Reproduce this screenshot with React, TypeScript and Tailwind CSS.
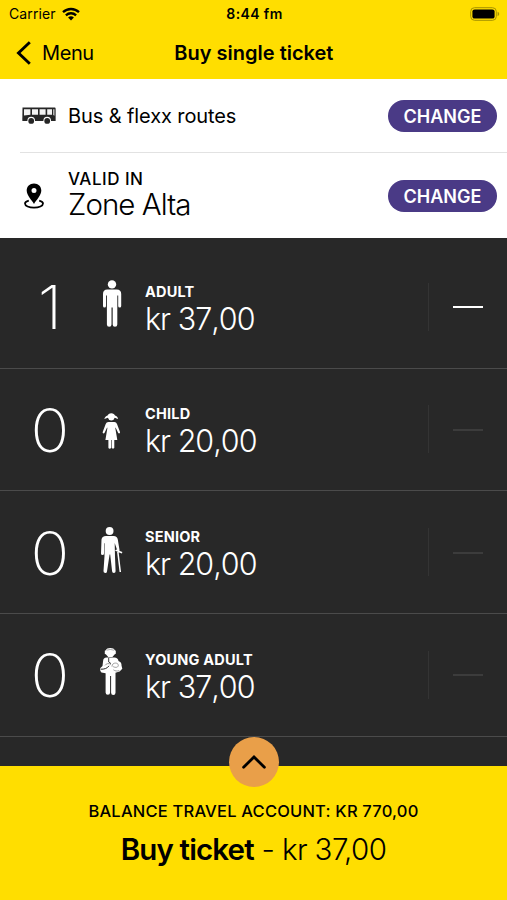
import React from 'react';

type Kind = 'adult' | 'child' | 'senior' | 'young';

interface Ticket {
  kind: Kind;
  label: string;
  price: string;
  count: number;
}

const tickets: Ticket[] = [
  { kind: 'adult', label: 'ADULT', price: 'kr 37,00', count: 1 },
  { kind: 'child', label: 'CHILD', price: 'kr 20,00', count: 0 },
  { kind: 'senior', label: 'SENIOR', price: 'kr 20,00', count: 0 },
  { kind: 'young', label: 'YOUNG ADULT', price: 'kr 37,00', count: 0 },
];

const WifiIcon: React.FC = () => (
  <svg className="w-[18px] h-[14px]" viewBox="0 0 18 14" fill="none" stroke="black" strokeWidth="2.3">
    <path d="M1 5.2a11.6 11.6 0 0 1 16 0" />
    <path d="M3.9 8.3a7.4 7.4 0 0 1 10.2 0" />
    <path d="M6.1 10.6a4.3 4.3 0 0 1 5.8 0L9 13.5z" fill="black" stroke="none" />
  </svg>
);

const BatteryIcon: React.FC = () => (
  <svg className="w-[30px] h-[14px]" viewBox="0 0 30 14">
    <rect x="0.7" y="0.7" width="25.6" height="12.6" rx="3.8" fill="none" stroke="#a69200" strokeWidth="1" />
    <rect x="2.4" y="2.4" width="22.2" height="9.2" rx="2.2" fill="black" />
    <path d="M27.6 4.8v4.4c1-.4 1.6-1.2 1.6-2.2s-.6-1.8-1.6-2.2z" fill="#a69200" />
  </svg>
);

const BusIcon: React.FC = () => (
  <svg className="w-[34px] h-[17px]" viewBox="0 0 34 17">
    <path d="M.5.5h32.3q.8 0 .8.9v12.6H.9q-.6 0-.6-.6z" fill="#262626" />
    <path d="M2 2.2h6.4v5.6L2 8.600zM10 2.200h6v5.600h-6zM17.600 2.200h6v5.600h-6zM25.200 2.200h4.800v5.600h-4.800zM31.300 2.200h1.100v6.600l-1.100-.8z" fill="#f4f4f4" />
    <circle cx="9.200" cy="13.600" r="3.800" fill="white" />
    <circle cx="25.200" cy="13.600" r="3.800" fill="white" />
    <circle cx="9.200" cy="13.900" r="2.900" fill="#262626" />
    <circle cx="25.200" cy="13.900" r="2.900" fill="#262626" />
  </svg>
);

const PinIcon: React.FC = () => (
  <svg className="w-5 h-[26px]" viewBox="0 0 20 26">
    <path
      d="M10 .4c-4.300 0-7.300 3.100-7.300 7.200C2.700 12.400 7.600 17 10 21c2.400-4 7.300-8.600 7.300-13.400C17.300 3.500 14.300.4 10 .4zm0 4.500a2.500 2.500 0 1 1 0 5 2.500 2.500 0 0 1 0-5z"
      fill="black"
      fillRule="evenodd"
    />
    <path d="M4.800 17.600C2.300 18.200 1 19.300 1 20.600c0 2.400 4 4.100 9 4.100s9-1.700 9-4.100c0-1.300-1.300-2.400-3.800-3" fill="none" stroke="black" strokeWidth="1.800" />
  </svg>
);

const PersonIcon: React.FC<{ kind: Kind }> = ({ kind }) => {
  if (kind === 'adult') {
    return (
      <svg className="w-6 h-12 mb-[5px]" viewBox="0 0 24 48" fill="white">
        <circle cx="12" cy="4.400" r="4.200" />
        <path d="M7.300 9.600h9.400q4.500 0 4.500 4.500v12a1.500 1.500 0 0 1-3 0v-10.700h-.9v29a2 2 0 0 1-4.600 0v-17h-1.200v17a2 2 0 0 1-4.600 0v-29h-.9v10.700a1.500 1.500 0 0 1-3 0v-12q0-4.500 4.300-4.500z" />
      </svg>
    );
  }
  if (kind === 'child') {
    return (
      <svg className="w-6 h-12" viewBox="0 0 24 48" fill="white">
        <path d="M11.300 8.200c2 0 3.300 1 3.700 2.300 1.700.4 2.700 1.500 3.200 3.600l-3.500-1.300a3.500 3.500 0 0 1-6.800 0l-3.600 1.300c.6-2.100 1.600-3.200 3.300-3.600.4-1.300 1.700-2.300 3.700-2.300z" />
        <path d="M8.400 17.100h6q1.900 0 2.600 1.900l3 8.100c.4 1.300-1.300 1.900-1.900.7l-2.500-5.300-.3.400 2 12.200h-3v7.600a1.400 1.400 0 0 1-2.600 0v-7.600h-.6v7.600a1.400 1.400 0 0 1-2.700 0v-7.600h-3l2-12.200-.3-.4-2.500 5.300c-.6 1.200-2.300.6-1.900-.7l3-8.100q.7-1.900 2.700-1.900z" />
      </svg>
    );
  }
  if (kind === 'senior') {
    return (
      <svg className="w-6 h-12 mb-[3px]" viewBox="0 0 24 48" fill="white">
        <circle cx="9.600" cy="4" r="3.900" />
        <path d="M6 8.900h7.600q3.600 0 4.200 3.700l1.800 10.800-1.900 1.300-3-8.700.3 13.700.6 14.500a1.700 1.700 0 0 1-3.500 0L10.200 27.500h-.6L7 44.400a1.700 1.700 0 0 1-3.500-.4L4.500 29V16l-.5.600v9.800a1.400 1.400 0 0 1-3 0l.5-13.800q.5-3.700 4.500-3.700z" />
        <path d="M15.700 24c1-1.400 2.300-.7 2.700.3l3.700 1.500M17.800 24.700l2.500 20.300" fill="none" stroke="white" strokeWidth="1.500" />
      </svg>
    );
  }
  return (
    <svg className="w-6 h-12 mb-[5px]" viewBox="0 0 24 48" fill="white">
      <path d="M10.300 0q3.600 0 4.500 2.300l1 .5v3l-1 .4-2.400 2.700H8.200L5.800 6.300l-1-.4V2.800l1-.5Q6.700 0 10.300 0z" />
      <path d="M6.600 2.200q3.700-1.500 7.400 0" fill="none" stroke="#777" strokeWidth=".6" />
      <path d="M6.600 9.500h7.700q3.700 0 4.200 3.600 3.300 1.300 3 4.400l.8 3.300-2.700 2.600-4.100 1.300v20a1.700 1.700 0 0 1-4.400 0V28h-1v16.600a1.700 1.700 0 0 1-4.500 0V25.200l-4.200-.6Q-.6 22.300.4 20l2.100-2 .6-4.900Q3.200 9.500 6.600 9.500z" />
      <path d="M8.700 10v4l2.300 1.600" fill="none" stroke="#282828" strokeWidth=".9" />
      <path d="M.6 21.200c3.500.2 6.800-.8 8.400-3.400" fill="none" stroke="#282828" strokeWidth="1" />
      <path d="M5 17.400c1-2 4.500-2.500 5.800-.8M12 18.600c-.4-4.500 6.700-4.500 6.300-1-.4 2.500-4 1.900-5.400.8M13.400 21.800c1.600 1.200 3.600 1.600 5.900.8" fill="none" stroke="#777" strokeWidth=".7" />
    </svg>
  );
};

const ChangeButton: React.FC = () => (
  <button className="w-[109px] h-8 pt-px rounded-full bg-[#4a3a86] text-white text-[18px] font-semibold whitespace-nowrap">
    CHANGE
  </button>
);

const TicketRow: React.FC<{ ticket: Ticket }> = ({ ticket }) => (
  <div className="flex items-center h-[122.67px] shrink-0 border-b border-[#4b4b4b]">
    <div className="w-[100px] pt-px text-center text-[60px] leading-[60px] font-extralight scale-x-[1.07]">{ticket.count}</div>
    <PersonIcon kind={ticket.kind} />
    <div className="ml-[21px] flex-1 pt-[6px]">
      <div className="text-[14.5px] leading-[18px] font-bold tracking-[0.2px]">{ticket.label}</div>
      <div className="text-[30.5px] leading-[36px] font-light tracking-[-1px] [font-kerning:none]">{ticket.price}</div>
    </div>
    <div className="flex items-center w-[79px] h-12 border-l border-[#343434]">
      <div className={`ml-[24px] mt-px w-[30px] h-[2px] ${ticket.count > 0 ? 'bg-white' : 'bg-[#3c3c3c]'}`} />
    </div>
  </div>
);

const App: React.FC = () => {
  return (
    <div className="flex flex-col w-[507px] h-[900px] overflow-hidden bg-white text-black font-['Inter',sans-serif]">
      <header className="h-[79px] bg-[#ffde00]">
        {/* Status bar */}
        <div className="grid grid-cols-3 items-center h-[27px] pl-[9px] pr-[7px]">
          <div className="flex items-center gap-[6px] text-[14px] tracking-[0.1px]">
            <span>Carrier</span>
            <WifiIcon />
          </div>
          <span className="text-center text-[14px] font-semibold tracking-[0.4px]">8:44 fm</span>
          <div className="flex justify-end">
            <BatteryIcon />
          </div>
        </div>

        {/* Navigation */}
        <div className="grid grid-cols-3 items-center h-[51px] pl-4 pr-4">
          <button className="flex items-center gap-[10px] text-[20px] tracking-[-0.4px]">
            <svg className="w-4 h-6" viewBox="0 0 16 24" fill="none" stroke="black" strokeWidth="2.900">
              <path d="M13.800 1.300 2.500 12l11.300 10.700" />
            </svg>
            Menu
          </button>
          <h1 className="text-center text-[20px] font-semibold whitespace-nowrap">Buy single ticket</h1>
        </div>
      </header>

      {/* Route and zone */}
      <section className="h-[159px]">
        <div className="flex items-center ml-5 pr-[10px] pl-[2px] h-[74px] border-b border-[#e2e2e2]">
          <BusIcon />
          <span className="ml-[12px] flex-1 text-[20px] tracking-[-0.1px]">Bus &amp; flexx routes</span>
          <ChangeButton />
        </div>
        <div className="flex items-center ml-5 pr-[10px] pl-1 h-[85px]">
          <PinIcon />
          <div className="ml-6 flex-1">
            <div className="text-[17px] leading-[17px] font-medium tracking-[0.5px]">VALID IN</div>
            <div className="text-[29.500px] leading-[32px] font-light tracking-[-0.95px]">Zone Alta</div>
          </div>
          <ChangeButton />
        </div>
      </section>

      <main className="flex flex-col h-[528px] pt-2 overflow-hidden bg-[#282828] text-white">
        {tickets.map((ticket) => (
          <TicketRow key={ticket.label} ticket={ticket} />
        ))}
      </main>

      <footer className="relative flex flex-col items-center h-[134px] pt-[34px] bg-[#ffde00]">
        <button className="absolute -top-[29px] left-[229px] flex items-center justify-center w-[50px] h-[50px] rounded-full bg-[#e99f49]">
          <svg className="w-6 h-[14px]" viewBox="0 0 24 14" fill="none" stroke="black" strokeWidth="2.800" strokeLinecap="round">
            <path d="M1.600 12.300 12 2l10.400 10.300" />
          </svg>
        </button>
        <p className="text-[16.5px] leading-[22px] font-medium tracking-[0.2px] whitespace-nowrap">BALANCE TRAVEL ACCOUNT: KR 770,00</p>
        <p className="mt-[9px] text-[29.500px] leading-[36px] font-light tracking-[-0.6px] whitespace-nowrap">
          <span className="font-semibold tracking-[-0.85px]">Buy ticket</span> - kr 37,00
        </p>
      </footer>
    </div>
  );
};

export default App;
